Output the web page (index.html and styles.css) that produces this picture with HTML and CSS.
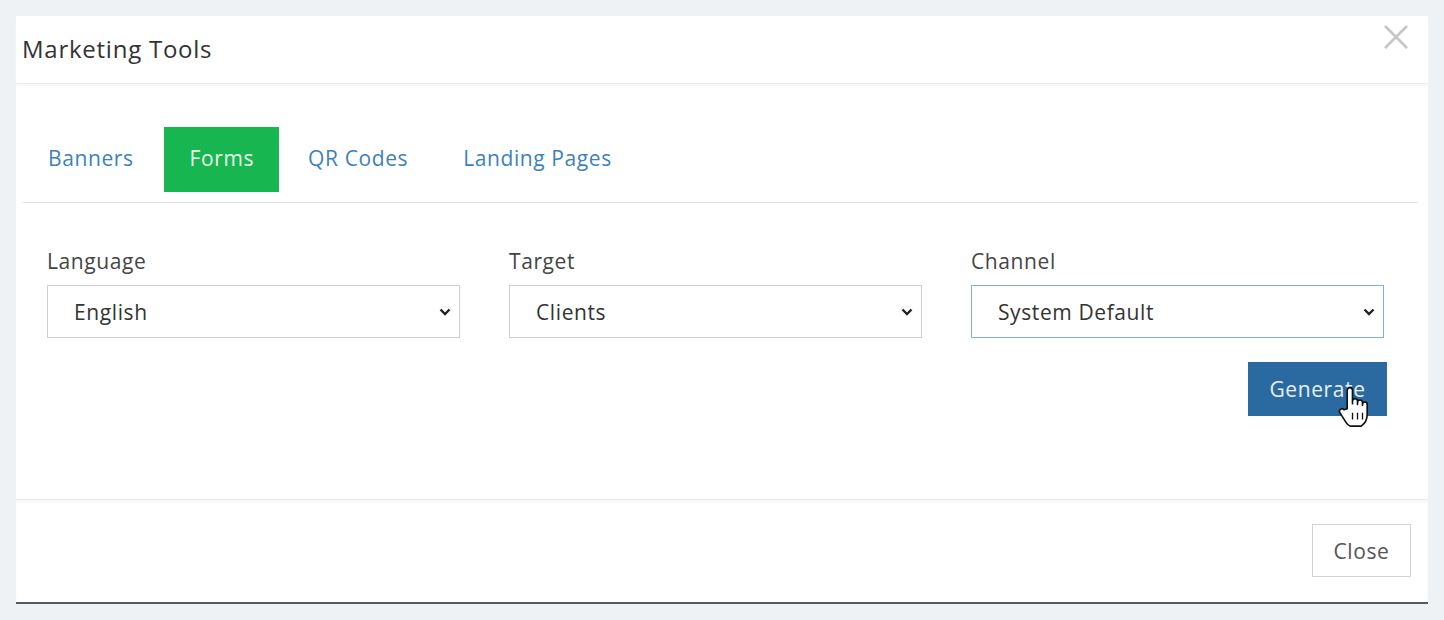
FILE: index.html
```html
<!DOCTYPE html>
<html lang="en">
<head>
<meta charset="utf-8">
<title>Marketing Tools</title>
<link rel="stylesheet" href="styles.css">
</head>
<body>
<div class="modal">
  <div class="modal-header">
    <h4 class="modal-title">Marketing Tools</h4>
    <button class="close" type="button" aria-label="Close">
      <svg width="26" height="26" viewBox="0 0 26 26"><path d="M2 2 L24 24 M24 2 L2 24" stroke="#c6c6c6" stroke-width="2.6" fill="none"/></svg>
    </button>
  </div>
  <div class="modal-body">
    <ul class="tabs">
      <li class="tab">Banners</li>
      <li class="tab active">Forms</li>
      <li class="tab">QR Codes</li>
      <li class="tab">Landing Pages</li>
    </ul>
    <div class="form">
      <div class="fields">
        <div class="field">
          <label class="label">Language</label>
          <select class="select"><option>English</option></select>
        </div>
        <div class="field">
          <label class="label">Target</label>
          <select class="select"><option>Clients</option></select>
        </div>
        <div class="field">
          <label class="label">Channel</label>
          <select class="select focused"><option>System Default</option></select>
        </div>
      </div>
      <div class="actions">
        <button class="btn-primary" type="button">Generate
          <svg class="pointer" width="30" height="46" viewBox="0 0 18 26"><path d="M5.5 14 V3 a1.6 1.6 0 0 1 3.2 0 V11 V9.5 a1.5 1.5 0 0 1 3 0 V11.5 V10.3 a1.5 1.5 0 0 1 3 0 V12 V11.4 a1.4 1.4 0 0 1 2.8 0 V17.5 c0 3.5 -1.6 5.6 -3.6 7 H8.2 c-1.6 0 -2.6 -1 -3.6 -2.6 L1.2 16.5 a1.5 1.5 0 0 1 2.4 -1.8 Z" fill="#fff" stroke="#111" stroke-width="1" stroke-linejoin="round"/><path d="M8.7 16.5 V20.5 M11.7 16.5 V20.5 M14.7 16.5 V20.5" stroke="#111" stroke-width="0.8"/></svg>
        </button>
      </div>
    </div>
  </div>
  <div class="modal-footer">
    <button class="btn-default" type="button">Close</button>
  </div>
</div>
</body>
</html>
```
FILE: styles.css
```css
* {
  box-sizing: border-box;
}

body {
  margin: 0;
  padding: 16px 16px 0;
  background: #eef2f5;
  font-family: "Open Sans", "Noto Sans", sans-serif;
  color: #333;
}

.modal {
  width: 1412px;
  background: #fff;
  border-bottom: 2px solid #58595b;
}

.modal-header {
  height: 68px;
  display: flex;
  align-items: center;
  justify-content: space-between;
  padding: 0 19px 0 6px;
  border-bottom: 1px solid #eeeeee;
  box-shadow: 0 2px 2px #f7f7f7;
}

.modal-title {
  margin: 0 0 2px;
  font-size: 24px;
  font-weight: 400;
  letter-spacing: 0.75px;
  color: #333;
}

.close {
  border: 0;
  background: none;
  padding: 0;
  margin-top: -26px;
  display: flex;
}

.modal-body {
  padding-top: 43px;
}

.tabs {
  list-style: none;
  margin: 0 10px 0 7px;
  padding: 0 0 10px 0;
  display: flex;
  gap: 4px;
  border-bottom: 1px solid #e2e2e2;
}

.tab {
  height: 65px;
  line-height: 63px;
  padding: 0 26px 0 25px;
  font-size: 21px;
  letter-spacing: 0.6px;
  color: #3d82ba;
}

.tab.active {
  background: #17b651;
  color: #e9fbe9;
  padding: 0 25px 0 26px;
}

.form {
  padding: 43px 41px 83px 31px;
}

.fields {
  display: grid;
  grid-template-columns: repeat(3, 413px);
  column-gap: 49px;
}

.field {
  display: flex;
  flex-direction: column;
}

.label {
  font-size: 21px;
  letter-spacing: 0.6px;
  line-height: 30px;
  margin-bottom: 9px;
  color: #454545;
}

.select {
  appearance: none;
  -webkit-appearance: none;
  height: 53px;
  border: 1px solid #cfcfcf;
  border-radius: 0;
  background: #fff url("data:image/svg+xml;utf8,<svg xmlns='http://www.w3.org/2000/svg' width='12' height='8' viewBox='0 0 12 8'><path d='M1.5 1.5 L6 6 L10.5 1.5' stroke='%23222' stroke-width='2.4' fill='none'/></svg>") no-repeat right 8px center;
  padding: 0 30px 0 26px;
  font-family: inherit;
  font-size: 21px;
  letter-spacing: 0.6px;
  color: #333;
}

.select.focused {
  border-color: #7cb2d8;
}

.actions {
  display: flex;
  justify-content: flex-end;
  margin-top: 24px;
}

.btn-primary {
  position: relative;
  height: 54px;
  width: 139px;
  border: 0;
  background: #2b6aa1;
  color: #e9f0f7;
  font-family: inherit;
  font-size: 21px;
  letter-spacing: 0.6px;
  padding: 0;
}

.pointer {
  position: absolute;
  left: 90px;
  top: 22px;
}

.modal-footer {
  display: flex;
  justify-content: flex-end;
  padding: 24px 17px 25px;
  border-top: 1px solid #e9e9e9;
  box-shadow: inset 0 2px 3px #f7f7f7;
}

.btn-default {
  height: 53px;
  width: 99px;
  border: 1px solid #d2d2d2;
  background: #fff;
  color: #555;
  font-family: inherit;
  font-size: 21px;
  letter-spacing: 0.6px;
  padding: 0;
}
```
